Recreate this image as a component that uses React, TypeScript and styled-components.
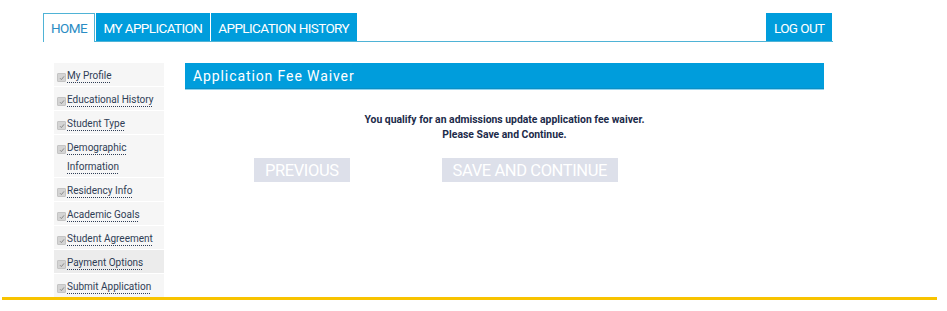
import styled, { createGlobalStyle } from 'styled-components';

const GlobalStyle = createGlobalStyle`
  body {
    margin: 0;
    background: #ffffff;
    font-family: Roboto, 'Liberation Sans', Arial, sans-serif;
  }
`;

const steps = [
  'My Profile',
  'Educational History',
  'Student Type',
  'Demographic Information',
  'Residency Info',
  'Academic Goals',
  'Student Agreement',
  'Payment Options',
  'Submit Application',
];

const Page = styled.div`
  width: 935px;
  margin-left: 2px;
  padding-top: 13px;
  border-bottom: 3px solid #f8c300;
`;

const NavBar = styled.nav`
  width: 790px;
  margin-left: 41px;
  display: flex;
  align-items: flex-end;
  border-bottom: 1px solid #4fb3d6;
`;

const Tab = styled.a<{ $active?: boolean }>`
  display: flex;
  align-items: center;
  padding: 0 ${(p) => (p.$active ? '7px' : '6.5px')};
  box-sizing: border-box;
  font-size: 13.5px;
  letter-spacing: -0.6px;
  text-transform: uppercase;
  cursor: pointer;
  color: ${(p) => (p.$active ? '#2a8cc4' : '#ffffff')};
  background: ${(p) => (p.$active ? '#ffffff' : '#009ddc')};
  border: 1px solid ${(p) => (p.$active ? '#4fb3d6' : '#009ddc')};
  border-bottom: none;
  margin-right: 1px;
  margin-bottom: ${(p) => (p.$active ? '-1px' : '0')};
  height: ${(p) => (p.$active ? '29px' : '28px')};
`;

const Spacer = styled.div`
  flex: 1;
`;

const Body = styled.div`
  display: flex;
  align-items: flex-start;
  margin-left: 52px;
  margin-top: 21px;
  gap: 21px;
`;

const Sidebar = styled.ul`
  list-style: none;
  margin: 0;
  padding: 0;
  width: 110px;
  background: #f6f6f6;
`;

const Step = styled.li<{ $hover?: boolean }>`
  display: flex;
  align-items: flex-start;
  padding: 3px 0 1px 3px;
  border-bottom: 1px solid #ffffff;
  background: ${(p) => (p.$hover ? '#ececec' : 'transparent')};
  &:last-child {
    border-bottom: none;
  }
`;

const Check = styled.span`
  flex: none;
  width: 7px;
  height: 7px;
  margin-top: 7px;
  margin-right: 1px;
  border-radius: 1px;
  background: #d4d4d4;
  border: 1px solid #c4c4c4;
  display: flex;
  align-items: center;
  justify-content: center;
`;

const StepLink = styled.a`
  font-size: 10px;
  line-height: 19px;
  color: #2f3d55;
  text-decoration: underline dotted #2f3d55;
  text-underline-offset: 3px;
  cursor: pointer;
`;

const Main = styled.main`
  width: 639px;
`;

const Header = styled.h2`
  margin: 0;
  height: 25px;
  padding-left: 8px;
  display: flex;
  align-items: center;
  background: #009ddc;
  border-bottom: 1px solid #0a8fc6;
  box-shadow: 0 1px 0 #8fd3ee;
  color: #ffffff;
  font-size: 14px;
  font-weight: 400;
  letter-spacing: 0.9px;
`;

const Message = styled.p`
  margin: 23px 0 0;
  text-align: center;
  font-size: 10.4px;
  font-weight: 700;
  line-height: 15px;
  color: #1c2b4a;
`;

const Actions = styled.div`
  display: flex;
  gap: 92px;
  padding-left: 69px;
  margin-top: 16px;
`;

const Button = styled.button`
  height: 24px;
  padding: 0 11px;
  border: none;
  background: #dde0ea;
  color: #ffffff;
  font-family: Roboto, 'Liberation Sans', Arial, sans-serif;
  font-size: 16.5px;
  letter-spacing: -0.4px;
  text-transform: uppercase;
`;

const CheckIcon = () => (
  <svg width="6" height="6" viewBox="0 0 6 6">
    <path d="M1 3.2 L2.4 4.6 L5 1.4" fill="none" stroke="#8a8a8a" strokeWidth="1" />
  </svg>
);

export default function App() {
  return (
    <>
      <GlobalStyle />
      <Page>
        <NavBar>
          <Tab $active>Home</Tab>
          <Tab>My Application</Tab>
          <Tab>Application History</Tab>
          <Spacer />
          <Tab>Log Out</Tab>
        </NavBar>
        <Body>
          <Sidebar>
            {steps.map((s) => (
              <Step key={s} $hover={s === 'Payment Options'}>
                <Check>
                  <CheckIcon />
                </Check>
                <StepLink>{s}</StepLink>
              </Step>
            ))}
          </Sidebar>
          <Main>
            <Header>Application Fee Waiver</Header>
            <Message>
              You qualify for an admissions update application fee waiver.
              <br />
              Please Save and Continue.
            </Message>
            <Actions>
              <Button>Previous</Button>
              <Button>Save and Continue</Button>
            </Actions>
          </Main>
        </Body>
      </Page>
    </>
  );
}
